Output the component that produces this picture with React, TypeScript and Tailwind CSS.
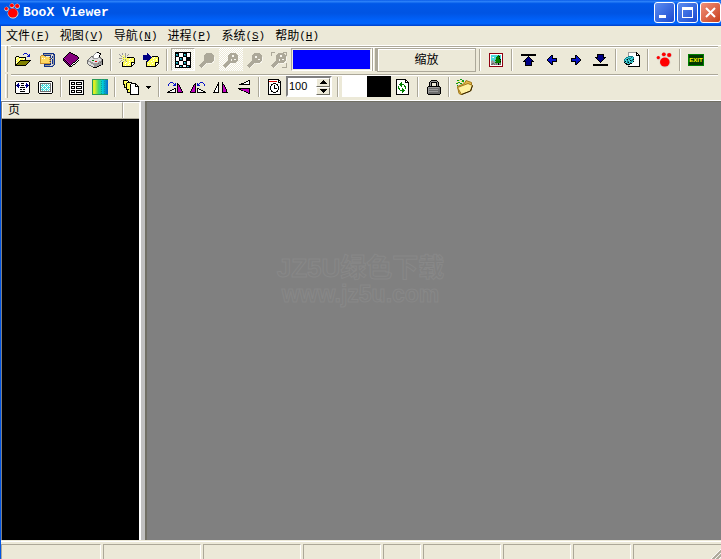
import * as React from "react";

const palette: Record<string, string> = {
  k: "#000000",
  w: "#ffffff",
  y: "#ffff5a",
  o: "#808000",
  b: "#0814c8",
  n: "#000084",
  a: "#103088",
  c: "#48d8d8",
  t: "#107c8c",
  g: "#9a9a9a",
  d: "#6c6c6c",
  m: "#c000c0",
  p: "#84007c",
  r: "#e00000",
  x: "#900010",
  v: "#008000",
  f: "#ffd860",
  e: "#c89030",
  l: "#dcdcdc"
};

function Pixels({ rows }: { rows: string[] }) {
  const width = Math.max(...rows.map((r) => r.length));
  const paths: Record<string, string> = {};
  rows.forEach((row, y) => {
    for (let x = 0; x < row.length; x++) {
      const ch = row[x];
      if (!palette[ch]) continue;
      paths[ch] = (paths[ch] ?? "") + `M${x} ${y}h1v1h-1z`;
    }
  });
  return (
    <svg width={width} height={rows.length} shapeRendering="crispEdges" aria-hidden="true">
      {Object.entries(paths).map(([ch, d]) => (
        <path key={ch} d={d} fill={palette[ch]} />
      ))}
    </svg>
  );
}

const art = {
  open: [
    ".........bbb....",
    "........b...b.b.",
    ".............bb.",
    ".kkk........bbb.",
    "kywykkkkkkk.....",
    "kwyyywyyywk.....",
    "kyyywyyywyk.....",
    "kwyyykkkkkkkkkkk",
    "kyyykoooooooook.",
    "kwykoooooooook..",
    "kykoooooooook...",
    "kkoooooooook....",
    "kkkkkkkkkkk....."
  ],
  zip: [
    "...aaaaaaaaaaa.",
    "...agggggggglaa",
    ".eeeaaaaaaallga",
    "effffe....alaga",
    "effffffffealaga",
    "efwfwfffffealga",
    "effffffffealaga",
    "efffffffffelaga",
    "effffffffealaga",
    "efffffffffelaga",
    "eeeeeeeeeealaga",
    "....aaaaaaallga",
    "....agggggllga.",
    "....aaaaaaaaa.."
  ],
  book: [
    "......kk........",
    ".....kppkk......",
    "....kpppppkk....",
    "...kppppppppkk..",
    "..kpppppppppppk.",
    ".kpppppppppppppk",
    "kmpppppppppppppk",
    "kkmpppppppppppkw",
    "kpkmpppppppppkwk",
    ".kpkmpppppppkwk.",
    "..kpkmppppkkwk..",
    "...kpkmppkwwk...",
    "....kpkmkwkk....",
    ".....kpkwk......",
    "......kkk......."
  ],
  printer: [
    ".........gkk....",
    "........gwwwkk..",
    ".......gwwwwwk..",
    "......gwwwwwk...",
    "....ddgwwwwwk...",
    "...dlggwwwwgdd..",
    "..dlllgggggllgd.",
    ".dllllllllllllgk",
    "dglllvvlllllllgk",
    "dgggllllrrllggdk",
    "dllggglllllggdgk",
    "dlllgggggggdgggk",
    ".dllllgggggggggk",
    "..ddlllgggggkk..",
    "....ddlgggkk....",
    "......kkkk......"
  ],
  create: [
    "...g..g.........",
    "g..g..g..g......",
    ".g..y.g.g.......",
    "..gy.yg.........",
    "....gyg.kkkkkkk.",
    "gggyyyyyyyywyyyk",
    "....gygyyywyyyyk",
    "..gy.ygyyyyyywyk",
    ".g..gyygyywyyyyk",
    "g..kyyywyyyykkkk",
    "...kyywyyywykwwk",
    "...kyyyyywyykwk.",
    "...kyywyyyyykk..",
    "...kkkkkkkkkk..."
  ],
  forward: [
    "....n...........",
    "....nn..........",
    "nnnnnnn.........",
    "nnnnnnnn.kkkkkk.",
    "nnnnnnnnnyywyyyk",
    "nnnnnnnnyywyyyyk",
    "nnnnnnnyyyyyywyk",
    "....nnyyyywyyyyk",
    "...knyyywyyyyyyk",
    "...kyyyyyyyykkkk",
    "...kywyyywyykwwk",
    "...kyyyyyyyykwk.",
    "...kyyywyyyykk..",
    "...kkkkkkkkkk..."
  ],
  checker: [
    "kkkkkkkkkkkkkkkk",
    "kkkkwwwwkkkkwwwk",
    "kctkwwwwkctkwwwk",
    "kttkwwwwkttkwwwk",
    "kkkkwwwwkkkkwwwk",
    "kwwwkkkkwwwkkkkk",
    "kwwwkctkwwwkkkkk",
    "kwwwkttkwwwkkkkk",
    "kwwwkkkkwwwkkkkk",
    "kkkkwwwwkkkkwwwk",
    "kctkwwwwkctkwwwk",
    "kttkwwwwkttkwwwk",
    "kkkkwwwwkkkkwwwk",
    "kwwwkkkkwwwkkkkk",
    "kwwwkctkwwwkctkk",
    "kkkkkkkkkkkkkkkk"
  ],
  picture: [
    "xxxxxxxxxxxxxx",
    "xwwwwwwwwwwwwx",
    "xwcccccccvccwx",
    "xwccccccvvkcwx",
    "xwclwccvvvvcwx",
    "xwcccccvvvkcwx",
    "xwccccgvvvvkwx",
    "xwcgccvvvvvvwx",
    "xwgggcgvvvvkwx",
    "xwggggvvvvvvwx",
    "xwgddggdgkgdwx",
    "xwddgdgdgkddwx",
    "xwwwwwwwwwwwwx",
    "xxxxxxxxxxxxxx"
  ],
  first: [
    "kkkkkkkkkkkkkkk",
    "kkkkkkkkkkkkkkk",
    ".......k.......",
    "......knk......",
    ".....knnnk.....",
    "....knnnnnk....",
    "...knnnnnnnk...",
    "..kkknnnnnkkk..",
    "....knnnnnk....",
    "....knnnnnk....",
    "....knnnnnk....",
    "....kkkkkkk...."
  ],
  prev: [
    "....kk....",
    "...kbk....",
    "..kbbk....",
    ".kbbbkkkkk",
    "kbbbbbbbbk",
    "kbbbbbbbbk",
    ".knbbkkkkk",
    "..knbk....",
    "...knk....",
    "....kk...."
  ],
  next: [
    "....kk....",
    "....kbk...",
    "....kbbk..",
    "kkkkkbbbk.",
    "kbbbbbbbbk",
    "kbbbbbbbbk",
    "kkkkkbbnk.",
    "....kbnk..",
    "....knk...",
    "....kk...."
  ],
  last: [
    "....kkkkkkk....",
    "....knnnnnk....",
    "....knnnnnk....",
    "..kkknnnnnkkk..",
    "...knnnnnnnk...",
    "....knnnnnk....",
    ".....knnnk.....",
    "......knk......",
    ".......k.......",
    "...............",
    "kkkkkkkkkkkkkkk",
    "kkkkkkkkkkkkkkk"
  ],
  export: [
    "....ggggggggk...",
    "....gwwwwwwwkk..",
    "....gwwwwwwwkwk.",
    "....gwwwwwwwkkkk",
    "....tttttwwwwwwk",
    "..ttccctctwwwwwk",
    ".tcctttcctwwwwwk",
    "tctkctcctkwwwwwk",
    "tcctcckttcwwwwwk",
    "tkcttcctckwwwwwk",
    "kcctkctccwwwwwwk",
    ".kkcctkkwwwwwwwk",
    "..kkkkwwwwwwwwwk",
    "....gwwwwwwwwwwk",
    "....kkkkkkkkkkkk"
  ],
  fitWidth: [
    ".kkkkkkkkkkkkk.",
    "kwwwwwwwwwwwwwk",
    "kwwnwwkkkwwnwwk",
    "kwnnwwwwwwwnnwk",
    "knnnnwkkkwnnnnk",
    "kwnnwwwwwwwnnwk",
    "kwwnwkkkkkwnwwk",
    "kwwwwwwwwwwwwwk",
    "kwwwwkkwkkwwwwk",
    "kwwwwwwwwwwwwwk",
    "kwwwwkkkkkwwwwk",
    "kwwwwwwwwwwwwwk",
    ".kkkkkkkkkkkkk."
  ],
  fitPage: [
    ".kkkkkkkkkkkkk.",
    "kwwwwwwwwwwwwwk",
    "kwdddddddddddwk",
    "kwdwcwcwcwcwdwk",
    "kwdcccwcccwcdwk",
    "kwdwcwcwcwcwdwk",
    "kwdcwcccwcccdwk",
    "kwdwcwcwcwcwdwk",
    "kwdcccwcccwcdwk",
    "kwdwcwcwcwcwdwk",
    "kwdddddddddddwk",
    "kwwwwwwwwwwwwwk",
    ".kkkkkkkkkkkkk."
  ],
  list: [
    "kkkkkkkkkkkkkkk",
    "kwwwwwwwwwwwwwk",
    "kwkkkkwkkkkkkwk",
    "kwkwwkwkwwwwkwk",
    "kwkkkkwkkkkkkwk",
    "kwwwwwwwwwwwwwk",
    "kwkkkkwkkkkkkwk",
    "kwkwwkwkwwwwkwk",
    "kwkkkkwkkkkkkwk",
    "kwwwwwwwwwwwwwk",
    "kwkkkkwkkkkkkwk",
    "kwkwwkwkwwwwkwk",
    "kwkkkkwkkkkkkwk",
    "kwwwwwwwwwwwwwk",
    "kkkkkkkkkkkkkkk"
  ],
  pages: [
    "kkkkk...........",
    "kyyywk..........",
    "kyyykkkkk.......",
    "kyykyyywkkkkk...",
    "kkykyyykwwwwkk..",
    ".kykyyykwwwwkwk.",
    ".kykyyykwwwwkkkk",
    ".kkkyyykwwwwwwwk",
    "...kyyykwwwwwwwk",
    "...kkkykwwwwwwwk",
    "....kyykwwwwwwwk",
    "....kyykwwwwwwwk",
    "....kkkkwwwwwwwk",
    ".......kwwwwwwwk",
    ".......kkkkkkkkk"
  ],
  rotateRight: [
    "...bbb..........",
    "..b...b.b.k.....",
    ".b.....bb.kk....",
    ".b....bbb.kmk...",
    "..........kmk...",
    "..........kmmk..",
    ".......kk.kmmk..",
    ".....kkwk.kmmmk.",
    "...kkwwwk.kmmmk.",
    ".kkwwwwwk.kmmmmk",
    "kkkkkkkkk.kkkkkk"
  ],
  rotateLeft: [
    "..........bbb...",
    ".....k.b.b...b..",
    "....kk.bb.....b.",
    "...kmk.bbb....b.",
    "...kmk..........",
    "..kmmk..........",
    "..kmmk.kk.......",
    ".kmmmk.kwkk.....",
    ".kmmmk.kwwwkk...",
    "kmmmmk.kwwwwwkk.",
    "kkkkkk.kkkkkkkkk"
  ],
  flipH: [
    ".....k...k.....",
    ".....k...k.....",
    "....kk...kk....",
    "....kk...kmk...",
    "...kwk...kmk...",
    "...kwk...kmmk..",
    "..kwwk...kmmk..",
    "..kwwk...kmmmk.",
    ".kwwwk...kmmmk.",
    ".kwwwk...kmmmk.",
    "kkkkkk...kkkkkk"
  ],
  flipV: [
    "..........kk",
    "........kkwk",
    "......kkwwwk",
    "...kkkwwwwwk",
    ".kkkkkkkkkkk",
    "............",
    "............",
    "............",
    "kkkkkkkkkkkk",
    ".kkmmmmmmmmk",
    "...kkmmmmmmk",
    "......kkmmmk",
    "........kkmk",
    "..........kk"
  ],
  timer: [
    "kkkkkkkkkkk..",
    "kwwwwwwwwwkk.",
    "krrrrrrrrwkwk",
    "kwwwwwwwwwkkk",
    "kwwwwkkkwwwwk",
    "kwwkkwwwkkwwk",
    "kwwkwwkwwkwwk",
    "kwkwwwkwwwkwk",
    "kwkwwwkwwwkwk",
    "kwkwwwkkkwkwk",
    "kwkwwwwwwwkwk",
    "kwwkwwwwwkwwk",
    "kwwkkwwwkkwwk",
    "kwwwwkkkwwwwk",
    "kwwwwwwwwwwwk",
    "kkkkkkkkkkkkk"
  ],
  refresh: [
    "kkkkkkkkkk...",
    "kwwwwwwwwkk..",
    "kwwwwwwwwkwk.",
    "kwwwwvwwwkkkk",
    "kwwwvvwwwwwwk",
    "kwwvvvvvwwwwk",
    "kwwwvvwwvwwwk",
    "kwvwwvwwvvwwk",
    "kwvwwwwwwvwwk",
    "kwvvwwvwwvwwk",
    "kwwvwwvvwwwwk",
    "kwwwvvvvvwwwk",
    "kwwwwwvvwwwwk",
    "kwwwwwvwwwwwk",
    "kwwwwwwwwwwwk",
    "kkkkkkkkkkkkk"
  ],
  lock: [
    "....kkkkkk....",
    "...kggggggk...",
    "..kgkkkkkkgk..",
    "..kgk....kgk..",
    "..kgk....kgk..",
    "..kgk....kgk..",
    ".kkkkkkkkkkkk.",
    "kgggggggggggdk",
    "kgdddddddddddk",
    "kggggggggggddk",
    "kgdddddddddddk",
    "kggggggggggddk",
    "kgdddddddddddk",
    "kddddddddddddk",
    ".kkkkkkkkkkkk."
  ]
};

type GlyphName = keyof typeof art;

function Paw() {
  return (
    <svg width="16" height="16" viewBox="0 0 16 16" aria-hidden="true">
      <g fill="#c8c8c8" stroke="#d8d4cc" strokeWidth="1">
        <circle cx="2.5" cy="6" r="1.8" />
        <circle cx="8" cy="2.7" r="2" />
        <circle cx="13.3" cy="3.2" r="2.2" />
        <ellipse cx="9" cy="10.5" rx="5" ry="4.6" />
      </g>
      <g fill="#ff0000">
        <circle cx="2.3" cy="5.6" r="1.6" />
        <circle cx="7.8" cy="2.3" r="1.9" />
        <circle cx="13.2" cy="3" r="2.1" />
        <ellipse cx="8.8" cy="10" rx="4.8" ry="4.6" />
      </g>
    </svg>
  );
}

function Magnifier({ mark, frame }: { mark?: "plus" | "minus"; frame?: boolean }) {
  return (
    <svg width="18" height="18" viewBox="0 0 18 18" shapeRendering="crispEdges" aria-hidden="true">
      <g stroke="#f8f6ee" fill="#f8f6ee">
        <circle cx="12" cy="8" r="4.5" />
        <path d="M8 11L3 16" strokeWidth="3" />
      </g>
      <g stroke="#aca899" fill="#aca899">
        <circle cx="11" cy="7" r="4.8" />
        <path d="M8 10L2 16" strokeWidth="3" />
      </g>
      {mark === "plus" && <path d="M10 4h2v2h-2zM12 8h2v1h-2zM9 8h1v2h-1z" fill="#f8f6ee" />}
      {mark === "minus" && <path d="M9 5h2v2h-2zM12 8h2v1h-2z" fill="#f8f6ee" />}
      {frame && <path d="M1.5 5V1.500H5M13 1.500H16.500V5M16.500 12V16.500H12" fill="none" stroke="#aca899" />}
    </svg>
  );
}

function Spectrum() {
  return (
    <svg width="16" height="16" aria-hidden="true">
      <defs>
        <linearGradient id="spectrum">
          <stop offset="0" stopColor="#d8e020" />
          <stop offset="0.15" stopColor="#e0f020" />
          <stop offset="0.4" stopColor="#48d868" />
          <stop offset="0.65" stopColor="#00d0d8" />
          <stop offset="1" stopColor="#0868c8" />
        </linearGradient>
      </defs>
      <rect width="16" height="16" fill="url(#spectrum)" />
      <path d="M0 .5h16M.5 0v16M0 15.500h16" stroke="#289858" />
      <path d="M9.500 0v16M12.500 0v16" stroke="#1098a0" strokeDasharray="1 1" />
    </svg>
  );
}

function GoldFolder() {
  return (
    <svg width="17" height="16" aria-hidden="true">
      <path d="M1 1h2v1h-2zM4 0h2v1h-2zM2 3h2v1h-2zM6 1h2v2h-2zM0 4h2v1h-2zM4 4h2v1h-2zM1 6h1v1h-1z" fill="#109818" />
      <path d="M3 1h1v1h-1zM5 2h1v1h-1zM1 3h1v1h-1zM7 3h1v1h-1z" fill="#e8e020" />
      <path d="M1.500 7.500L8.500 4.500L10 1.500L15.500 3.500V11L5 15.500L3 14.500Z" fill="#e8b848" stroke="#a07818" />
      <path d="M1.500 8.500L12 4.500L16.500 6.500L14.500 12L5.500 15.500Z" fill="#fff0a0" stroke="#a07818" />
      <path d="M5.500 15.500L14.500 12L16.500 6.500" fill="none" stroke="#302000" />
    </svg>
  );
}

function ExitSign() {
  return (
    <svg width="16" height="12" aria-hidden="true">
      <rect width="16" height="12" fill="#003800" />
      <rect x="0.500" y="0.500" width="15" height="11" fill="none" stroke="#008000" />
      <text x="8" y="8" textAnchor="middle" fontFamily="Liberation Sans, sans-serif" fontSize="6" fontWeight="700" fill="#ffff00">
        EXIT
      </text>
    </svg>
  );
}

function Separator() {
  return (
    <div className="flex w-2 shrink-0 justify-center self-stretch py-px">
      <div className="w-0.5 border-r border-l border-r-white border-l-[#aca899]" />
    </div>
  );
}

function Grip() {
  return (
    <div className="mr-[3px] ml-1 flex w-[3px] shrink-0 self-stretch border-r border-l border-r-[#aca899] border-l-white" />
  );
}

type ToolProps = {
  label: string;
  glyph?: GlyphName;
  narrow?: boolean;
  children?: React.ReactNode;
};

function Tool({ label, glyph, narrow, children }: ToolProps) {
  return (
    <button
      type="button"
      aria-label={label}
      className={`flex shrink-0 items-center justify-center ${narrow ? "h-[22px] w-[23px]" : "h-[23px] w-6"}`}
    >
      {glyph ? <Pixels rows={art[glyph]} /> : children}
    </button>
  );
}

const dither =
  "bg-[conic-gradient(#ffffff_25%,#ece9d8_0_50%,#ffffff_0_75%,#ece9d8_0)] bg-[length:2px_2px]";

const menus = [
  { text: "文件", key: "F" },
  { text: "视图", key: "V" },
  { text: "导航", key: "N" },
  { text: "进程", key: "P" },
  { text: "系统", key: "S" },
  { text: "帮助", key: "H" }
];

function TitleBar() {
  const button =
    "flex h-[21px] w-[21px] items-center justify-center rounded-[3px] border border-white bg-linear-to-br";
  return (
    <header className="flex h-[26px] shrink-0 items-center bg-[linear-gradient(#0a5ce8_0%,#2a80f8_6%,#0058e8_14%,#0054e3_50%,#0060f8_75%,#0064fc_90%,#0040c8_100%)] pb-px pl-1">
      <div className="-mt-1">
        <Paw />
      </div>
      <h1 className="ml-[3px] flex-1 font-['Liberation_Mono',monospace] text-[13px] font-bold text-white">
        BooX Viewer
      </h1>
      <div className="flex gap-0.5">
        <button type="button" aria-label="最小化" className={`${button} from-[#5c8cf0] to-[#1c48d0]`}>
          <svg width="13" height="13" aria-hidden="true">
            <path d="M1 9h7v3h-7z" fill="#ffffff" />
          </svg>
        </button>
        <button type="button" aria-label="最大化" className={`${button} from-[#5c8cf0] to-[#1c48d0]`}>
          <svg width="13" height="13" shapeRendering="crispEdges" aria-hidden="true">
            <path d="M1 1h11v11h-11zM2 4v7h9v-7z" fill="#ffffff" fillRule="evenodd" />
          </svg>
        </button>
        <button type="button" aria-label="关闭" className={`${button} from-[#f09078] to-[#c83c14]`}>
          <svg width="13" height="13" aria-hidden="true">
            <path d="M2 2l9 9M11 2l-9 9" stroke="#ffffff" strokeWidth="2" />
          </svg>
        </button>
      </div>
    </header>
  );
}

function MenuBar() {
  return (
    <nav className="flex h-5 shrink-0 items-center gap-2.5 border-b border-white pl-[5px]">
      {menus.map((m) => (
        <button key={m.key} type="button" className="flex shrink-0 items-center leading-4">
          {m.text}
          <span className="font-['Liberation_Mono',monospace] text-[11px]">
            (<span className="underline">{m.key}</span>)
          </span>
        </button>
      ))}
    </nav>
  );
}

function Band({ className, children }: { className: string; children: React.ReactNode }) {
  return (
    <div className={`flex shrink-0 pb-0.5 ${className}`}>
      <Grip />
      <div className="mr-[3px] flex min-w-0 flex-1 items-start border-t border-[#aca899] pt-px shadow-[inset_0_1px_0_#ffffff]">
        {children}
      </div>
    </div>
  );
}

function MainToolbar() {
  return (
    <Band className="h-7">
      <Tool label="打开" glyph="open" />
      <Tool label="压缩包" glyph="zip" />
      <Tool label="书籍" glyph="book" />
      <Tool label="打印" glyph="printer" />
      <Separator />
      <Tool label="新建" glyph="create" />
      <Tool label="转到" glyph="forward" />
      <Separator />
      <button
        type="button"
        aria-label="背景"
        aria-pressed="true"
        className={`flex h-[23px] w-6 shrink-0 items-center justify-center border border-t-[#aca899] border-r-white border-b-white border-l-[#aca899] ${dither}`}
      >
        <Pixels rows={art.checker} />
      </button>
      <Tool label="放大镜">
        <Magnifier />
      </Tool>
      <button type="button" aria-label="放大" className={`flex h-[23px] w-6 shrink-0 items-center justify-center ${dither}`}>
        <Magnifier mark="plus" />
      </button>
      <Tool label="缩小">
        <Magnifier mark="minus" />
      </Tool>
      <Tool label="适合窗口">
        <Magnifier mark="plus" frame />
      </Tool>
      <div className="h-[23px] w-[81px] shrink-0 border border-t-[#aca899] border-r-white border-b-white border-l-[#aca899] p-px">
        <div className="h-full bg-[#0000ff]" />
      </div>
      <div className="flex h-[23px] w-[5px] shrink-0 justify-between border-r border-l border-[#aca899]">
        <div className="w-px bg-white" />
        <div className="w-px bg-[#aca899]" />
      </div>
      <button
        type="button"
        className="h-6 w-[99px] shrink-0 border border-[#aca899] shadow-[inset_1px_1px_0_#ffffff]"
      >
        缩放
      </button>
      <Separator />
      <Tool label="图片" glyph="picture" />
      <Separator />
      <Tool label="首页" glyph="first" />
      <Tool label="上一页" glyph="prev" />
      <Tool label="下一页" glyph="next" />
      <Tool label="末页" glyph="last" />
      <Separator />
      <Tool label="导出" glyph="export" />
      <Separator />
      <Tool label="关于">
        <Paw />
      </Tool>
      <Separator />
      <Tool label="退出">
        <ExitSign />
      </Tool>
    </Band>
  );
}

function PageToolbar() {
  const [delay, setDelay] = React.useState("100");
  const step = (n: number) => setDelay(String((Number(delay) || 0) + n));
  const spin =
    "flex flex-1 items-center justify-center border border-t-white border-r-[#716f64] border-b-[#716f64] border-l-white bg-[#ece9d8]";

  return (
    <Band className="h-[27px] border-b border-white">
      <Tool narrow label="适合宽度" glyph="fitWidth" />
      <Tool narrow label="适合页面" glyph="fitPage" />
      <Separator />
      <Tool narrow label="列表" glyph="list" />
      <Tool narrow label="色彩">
        <Spectrum />
      </Tool>
      <Separator />
      <Tool narrow label="多页" glyph="pages" />
      <button type="button" aria-label="更多" className="flex h-[22px] w-[13px] shrink-0 items-center justify-center">
        <svg width="5" height="3" shapeRendering="crispEdges" aria-hidden="true">
          <path d="M0 0h5v1h-5zM1 1h3v1h-3zM2 2h1v1h-1z" />
        </svg>
      </button>
      <Separator />
      <Tool narrow label="向右旋转" glyph="rotateRight" />
      <Tool narrow label="向左旋转" glyph="rotateLeft" />
      <Tool narrow label="水平翻转" glyph="flipH" />
      <Tool narrow label="垂直翻转" glyph="flipV" />
      <Separator />
      <Tool narrow label="定时" glyph="timer" />
      <div className="flex h-[21px] w-[46px] shrink-0 border-2 border-t-[#808080] border-r-white border-b-white border-l-[#808080] bg-white">
        <input
          aria-label="间隔"
          value={delay}
          onChange={(e) => setDelay(e.target.value)}
          className="h-4 w-7 min-w-0 bg-white pl-px font-['Liberation_Sans',sans-serif] text-[11px] outline-none"
        />
        <div className="flex flex-1 flex-col">
          <button type="button" aria-label="增加" onClick={() => step(1)} className={spin}>
            <svg width="7" height="4" shapeRendering="crispEdges" aria-hidden="true">
              <path d="M3 0h1v1h-1zM2 1h3v1h-3zM1 2h5v1h-5zM0 3h7v1h-7z" />
            </svg>
          </button>
          <button type="button" aria-label="减少" onClick={() => step(-1)} className={spin}>
            <svg width="7" height="4" shapeRendering="crispEdges" aria-hidden="true">
              <path d="M0 0h7v1h-7zM1 1h5v1h-5zM2 2h3v1h-3zM3 3h1v1h-1z" />
            </svg>
          </button>
        </div>
      </div>
      <div className="flex w-2.5 shrink-0 justify-end self-stretch">
        <Separator />
      </div>
      <button type="button" aria-label="前景色" className="h-[21px] w-[25px] shrink-0 bg-white" />
      <button type="button" aria-label="背景色" className="h-[21px] w-6 shrink-0 bg-black" />
      <Tool narrow label="刷新" glyph="refresh" />
      <Separator />
      <Tool narrow label="锁定" glyph="lock" />
      <Separator />
      <Tool narrow label="文件夹">
        <GoldFolder />
      </Tool>
    </Band>
  );
}

function StatusBar() {
  const cell = "border-t border-r border-l border-t-[#aca899] border-r-white border-l-[#aca899]";
  return (
    <footer className="flex h-[19px] shrink-0 gap-0.5 border-t border-[#ece9d8] pt-[3px] shadow-[inset_0_1px_0_#ffffff]">
      <div className={`w-[100px] ${cell}`} />
      <div className={`w-[98px] ${cell}`} />
      <div className={`w-[98px] ${cell}`} />
      <div className={`w-[78px] ${cell}`} />
      <div className={`w-[38px] ${cell}`} />
      <div className={`w-[78px] ${cell}`} />
      <div className={`w-[68px] ${cell}`} />
      <div className={`w-[58px] ${cell}`} />
      <div className="flex flex-1 items-end justify-end border-t border-l border-[#aca899]">
        <svg width="10" height="10" aria-hidden="true">
          <path d="M0 10L10 0M4 10L10 4M8 10L10 8" stroke="#ffffff" />
          <path d="M1.500 10.500L10.500 1.500M5.500 10.500L10.500 5.500" stroke="#aca899" strokeWidth="2" />
        </svg>
      </div>
    </footer>
  );
}

export default function App() {
  return (
    <div className="relative flex h-screen flex-col overflow-hidden bg-[#ece9d8] font-['Liberation_Sans','Noto_Sans_CJK_SC',sans-serif] text-xs text-black">
      <TitleBar />
      <div className="flex min-h-0 flex-1 flex-col border-l border-[#0054e3]">
        <MenuBar />
        <MainToolbar />
        <PageToolbar />
        <main className="flex min-h-0 flex-1">
          <aside className="flex w-[140px] shrink-0 flex-col border-t border-r-2 border-l border-t-[#808080] border-r-white border-l-[#808080] bg-black">
            <div className="flex h-[17px] shrink-0 border-b border-[#aca899] bg-[#ece9d8]">
              <div className="flex-1 border-t border-r border-l border-t-white border-r-[#aca899] border-l-white pl-[5px] leading-[15px]">
                页
              </div>
              <div className="w-4 border-t border-l border-white" />
            </div>
          </aside>
          <div className="w-1 shrink-0 bg-[#c0c0c0]" />
          <section
            aria-label="页面"
            className="flex-1 border-t border-l-2 border-t-[#716f64] border-l-[#716f64] bg-[#808080]"
          />
        </main>
        <StatusBar />
      </div>
      <div className="pointer-events-none absolute inset-0 flex flex-col items-center justify-center font-bold text-[#808080] [-webkit-text-stroke:1px_#888888]">
        <span className="text-[26px] leading-7">JZ5U绿色下载</span>
        <span className="text-[23px] leading-6">www.jz5u.com</span>
      </div>
    </div>
  );
}
